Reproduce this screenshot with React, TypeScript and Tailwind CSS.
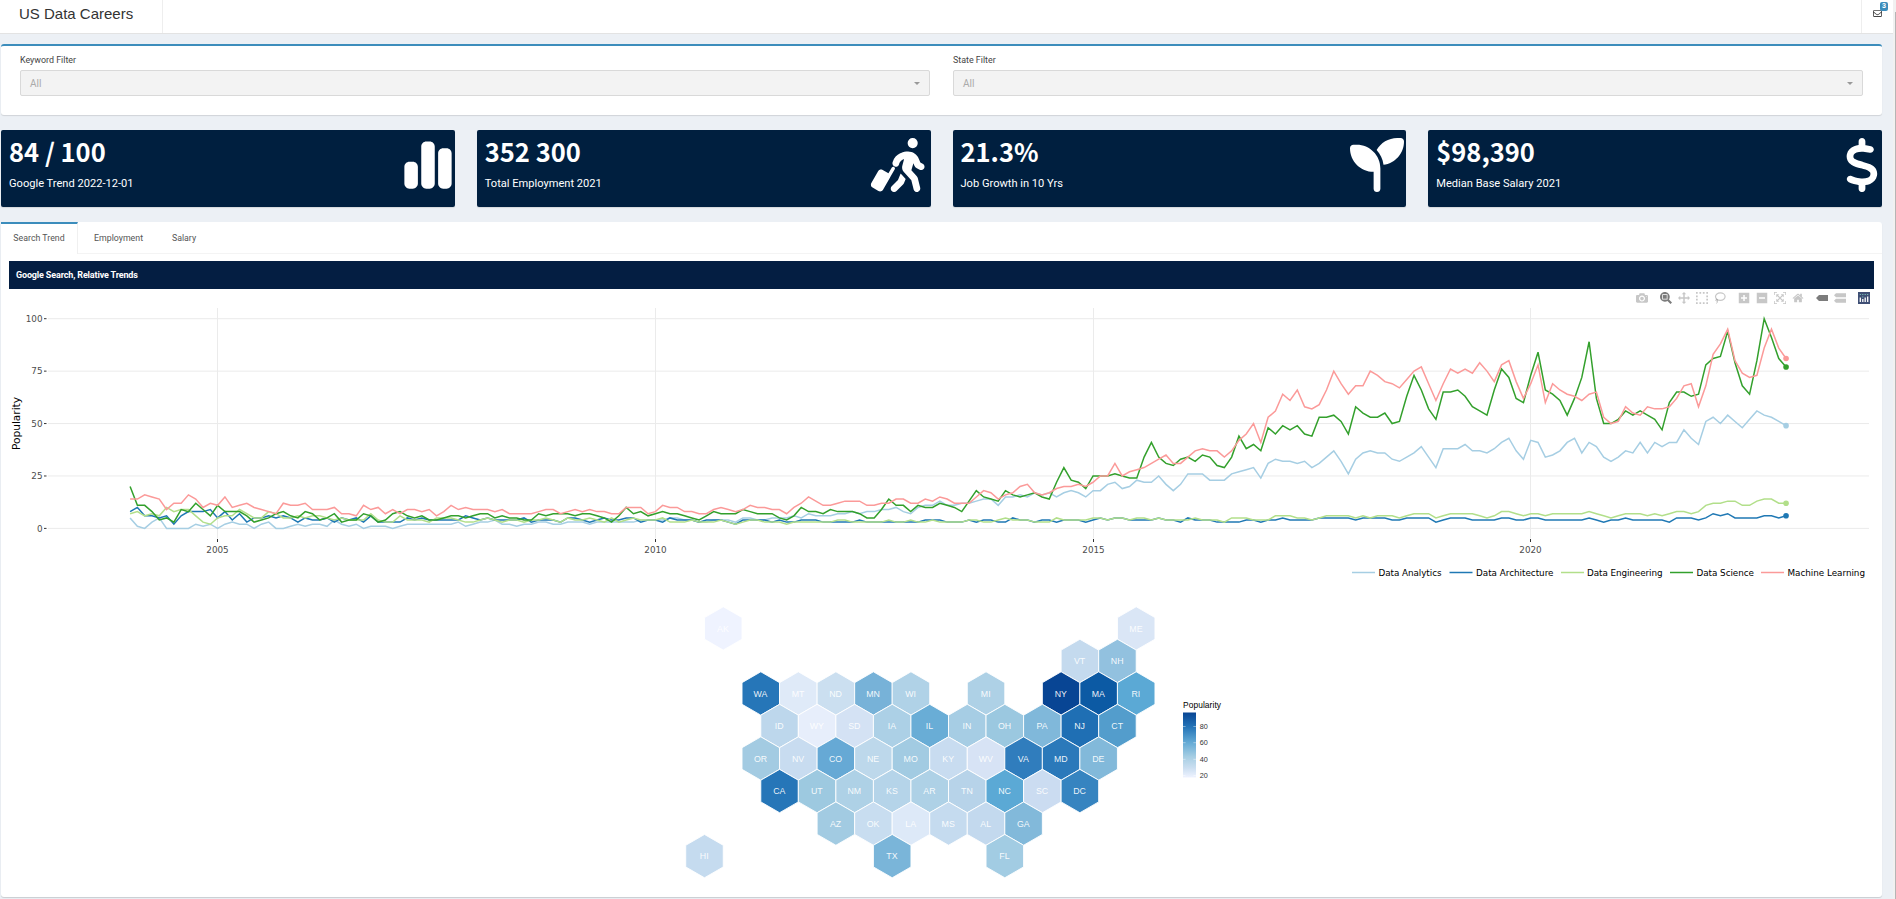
import { FaChartSimple, FaPersonWalkingLuggage, FaSeedling, FaDollarSign, FaRegEnvelope } from "react-icons/fa6";

const ML = [
  14,14,16,15,14,9,12,12,16,14,10,12, 11,15,10,11,12,10,9,8,7,12,11,11, 12,9,9,9,10,7,7,6,11,9,10,7,
  9,7,9,9,8,9,6,8,11,9,10,9, 9,9,8,9,7,7,7,7,8,9,9,7, 8,9,8,9,8,8,7,7,10,10,10,7,
  8,11,10,10,8,8,7,7,9,10,9,8, 9,11,10,10,9,9,7,10,12,15,13,11, 11,12,13,13,13,11,11,12,12,14,14,12,
  12,14,13,15,14,12,12,12,15,18,17,14, 16,17,20,21,17,16,17,19,20,20,21,20, 22,25,25,31,25,27,28,29,31,33,35,31,
  31,34,37,38,37,37,34,37,42,45,50,41, 53,56,64,61,66,58,57,59,66,75,69,64, 68,68,75,73,70,69,67,71,75,77,69,61,
  69,76,74,76,74,79,75,70,78,80,70,62, 69,78,60,69,66,64,63,61,64,65,53,50, 51,58,55,54,58,57,57,58,62,68,69,58,
  68,83,88,95,80,74,72,73,86,95,86,81,
];
const DS = [
  20,11,11,8,4,5,3,9,8,12,9,6, 11,8,8,8,6,3,4,5,7,8,6,5, 8,7,4,5,7,3,4,4,7,6,3,4,
  7,8,6,5,6,4,4,5,6,6,5,6, 7,7,5,6,5,5,4,4,7,6,7,7, 7,6,7,7,6,5,3,6,10,7,8,6,
  7,8,7,7,6,5,4,6,8,7,7,7, 9,8,7,7,7,5,4,6,10,8,8,7, 9,8,8,8,7,5,5,9,14,11,11,8,
  11,10,10,12,11,10,8,13,18,15,14,13, 18,16,15,16,17,15,14,22,29,23,22,19, 25,25,25,26,25,24,24,34,41,34,31,30,
  33,34,32,35,34,30,29,34,44,38,40,37, 48,45,49,47,49,45,44,53,53,54,51,45, 58,55,53,53,55,50,51,63,73,66,57,52,
  65,65,66,63,58,56,54,66,76,72,62,60, 73,84,66,64,61,54,62,72,89,62,50,50, 52,56,54,56,54,52,47,60,65,65,63,64,
  78,81,82,94,79,68,64,80,100,91,81,77,
];
const DA = [
  5,1,0,3,5,0,0,0,0,2,1,2, 0,2,3,2,2,0,2,3,0,0,1,2, 1,2,2,1,4,2,1,2,0,1,1,1,
  0,1,2,2,2,2,2,2,2,3,1,2, 3,3,4,2,2,1,2,2,3,3,2,2, 3,3,3,2,3,3,3,3,3,3,4,4,
  4,4,5,5,4,4,3,3,4,4,4,3, 5,5,4,4,5,5,5,6,5,7,6,6, 6,7,7,8,7,8,8,9,9,10,8,7,
  10,11,11,13,11,11,12,12,13,14,14,11, 15,15,16,15,17,16,17,15,17,18,17,15, 18,18,21,22,19,20,23,22,22,25,21,18,
  21,26,26,26,23,23,23,26,27,28,29,24, 31,33,32,32,31,32,29,31,34,37,32,26, 33,36,37,36,36,33,32,34,36,39,34,29,
  38,38,38,40,37,37,36,38,41,43,37,33, 42,41,34,35,37,41,43,36,41,39,34,32, 34,37,36,41,36,41,39,41,41,47,43,40,
  51,53,50,54,51,48,52,56,54,53,51,49,
];
const AR = [
  8,10,6,6,5,6,2,6,8,8,8,9, 5,8,4,7,3,5,5,6,5,6,5,3, 5,4,4,5,3,5,4,5,3,6,3,3,
  3,3,5,4,5,4,4,4,4,4,6,5, 4,5,4,4,4,4,5,3,4,4,4,3, 5,5,4,3,4,5,4,4,5,5,3,4,
  4,3,5,4,4,4,3,4,4,4,3,2, 4,4,4,4,3,4,3,3,4,4,4,3, 3,3,3,3,4,3,3,3,3,3,3,3,
  3,4,4,4,3,3,3,4,3,4,4,3, 3,5,4,4,3,4,4,3,4,4,4,3, 4,5,4,5,5,4,4,4,4,5,4,4,
  3,5,4,4,4,3,3,3,3,4,4,3, 4,4,5,4,4,4,4,5,5,5,5,5, 4,5,5,5,5,4,4,5,5,5,5,3,
  4,5,5,5,4,4,4,4,5,5,4,4, 5,5,4,4,4,4,4,4,5,4,3,4, 4,5,4,4,4,4,4,3,5,5,5,4,
  5,7,6,7,5,5,5,5,6,6,5,6,
];
const EN = [
  7,8,6,7,6,10,8,9,9,6,3,2, 5,6,6,9,7,5,5,8,7,5,5,6, 5,6,6,5,4,5,4,4,4,7,4,3,
  3,6,4,4,4,3,5,5,5,4,3,3, 4,5,4,3,4,4,3,4,4,5,4,3, 5,4,4,5,4,3,5,3,4,5,4,4,
  4,5,3,3,3,4,3,3,3,4,3,2, 3,4,4,3,3,3,2,3,3,3,3,3, 3,4,4,3,3,3,3,3,4,3,3,4,
  3,3,4,3,3,3,3,4,4,3,3,4, 5,4,4,4,3,3,3,5,4,4,4,4, 5,5,4,5,5,4,5,5,4,5,4,4,
  4,4,5,4,4,4,3,5,5,5,4,4, 4,6,6,6,5,5,4,5,6,6,6,6, 5,6,5,6,6,6,5,6,7,7,7,5,
  6,7,7,7,7,6,5,6,8,8,7,6, 7,7,6,7,7,7,7,7,8,7,6,5, 6,7,7,7,6,7,6,7,8,8,7,8,
  11,12,12,13,13,11,11,13,14,14,12,12,
];

type Series = { name: string; color: string; data: number[]; lineX: number; textX: number; textW: number };
const SERIES: Series[] = [
  { name: "Data Analytics", color: "#a6cee3", data: DA, lineX: 1352, textX: 1378.5, textW: 63 },
  { name: "Data Architecture", color: "#1f78b4", data: AR, lineX: 1449.5, textX: 1476, textW: 77.5 },
  { name: "Data Engineering", color: "#b2df8a", data: EN, lineX: 1561, textX: 1587, textW: 75.5 },
  { name: "Data Science", color: "#33a02c", data: DS, lineX: 1670, textX: 1696.5, textW: 57.5 },
  { name: "Machine Learning", color: "#fb9a99", data: ML, lineX: 1761, textX: 1787.5, textW: 77.5 },
];

const px = (m: number) => 130.1 + m * 7.295;
const py = (v: number) => 528.4 - v * 2.097;
const YEARS: [string, number][] = [["2005", 217.5], ["2010", 655.5], ["2015", 1093.5], ["2020", 1530.5]];

function TrendChart() {
  return (
    <svg className="block w-full h-[274px] font-['DejaVu_Sans',sans-serif]" viewBox="9 306 1865 274">
      {[0, 25, 50, 75, 100].map((v) => (
        <g key={v}>
          <line x1="48" x2="1869" y1={py(v)} y2={py(v)} stroke="#ebebeb" />
          <line x1="44" x2="46.5" y1={py(v)} y2={py(v)} stroke="#333" />
          <text x="42.5" y={py(v) + 3.3} fontSize="8.8" textAnchor="end" fill="#4d4d4d">{v}</text>
        </g>
      ))}
      {YEARS.map(([y, x]) => (
        <g key={y}>
          <line x1={x} x2={x} y1="308" y2="538.5" stroke="#ebebeb" />
          <line x1={x} x2={x} y1="539" y2="542" stroke="#333" />
          <text x={x} y="552.7" fontSize="8.8" textAnchor="middle" fill="#4d4d4d">{y}</text>
        </g>
      ))}
      <text transform="translate(20 423.5) rotate(-90)" textAnchor="middle" fontSize="10.6">Popularity</text>
      {SERIES.map((s) => (
        <polyline key={s.name} points={s.data.map((v, i) => `${px(i)},${py(v)}`).join(" ")} fill="none" stroke={s.color} strokeWidth="1.5" />
      ))}
      {SERIES.map((s) => (
        <circle key={s.name} cx={px(227)} cy={py(s.data[227])} r="2.8" fill={s.color} />
      ))}
      {SERIES.map((s) => (
        <g key={s.name}>
          <line x1={s.lineX} x2={s.lineX + 23} y1="572.5" y2="572.5" stroke={s.color} strokeWidth="1.5" />
          <text x={s.textX} y="575.7" fontSize="8.8" textLength={s.textW} fill="#000">{s.name}</text>
        </g>
      ))}
    </svg>
  );
}

const HEXES: [string, number, number, string][] = [
  ["AK", 0, -2, "#eff3ff"], ["ME", 0, 20, "#dae6f6"],
  ["VT", 1, 17, "#c4daee"], ["NH", 1, 19, "#92c1df"],
  ["WA", 2, 0, "#2676b8"], ["MT", 2, 2, "#dfeaf8"], ["ND", 2, 4, "#cbdff0"], ["MN", 2, 6, "#77b2d8"], ["WI", 2, 8, "#b0d2e7"],
  ["MI", 2, 12, "#aed1e6"], ["NY", 2, 16, "#084594"], ["MA", 2, 18, "#0c5aa4"], ["RI", 2, 20, "#5ba9d5"],
  ["ID", 3, 1, "#bdd7ec"], ["WY", 3, 3, "#e7eefb"], ["SD", 3, 5, "#d4e2f4"], ["IA", 3, 7, "#acd0e6"], ["IL", 3, 9, "#69add6"],
  ["IN", 3, 11, "#a6cde4"], ["OH", 3, 13, "#9bc8e0"], ["PA", 3, 15, "#80b8da"], ["NJ", 3, 17, "#1f6fb4"], ["CT", 3, 19, "#539dcc"],
  ["OR", 4, 0, "#a3cbe2"], ["NV", 4, 2, "#c8dcf0"], ["CO", 4, 4, "#66a9d5"], ["NE", 4, 6, "#bdd8eb"], ["MO", 4, 8, "#a2cbe2"],
  ["KY", 4, 10, "#c8dcf0"], ["WV", 4, 12, "#d7e3f5"], ["VA", 4, 14, "#307dbd"], ["MD", 4, 16, "#2b79ba"], ["DE", 4, 18, "#82b9da"],
  ["CA", 5, 1, "#2676b8"], ["UT", 5, 3, "#9dc9e0"], ["NM", 5, 5, "#aed1e6"], ["KS", 5, 7, "#b5d4e9"], ["AR", 5, 9, "#aed1e6"],
  ["TN", 5, 11, "#b7d3e9"], ["NC", 5, 13, "#5ba9d5"], ["SC", 5, 15, "#cbdcf1"], ["DC", 5, 17, "#3684c0"],
  ["AZ", 6, 4, "#a2cbe2"], ["OK", 6, 6, "#c8ddf0"], ["LA", 6, 8, "#dde9f8"], ["MS", 6, 10, "#c5dbef"], ["AL", 6, 12, "#c3d9ee"], ["GA", 6, 14, "#82b9da"],
  ["HI", 7, -3, "#c5dbef"], ["TX", 7, 7, "#7ab5d9"], ["FL", 7, 13, "#a2cce3"],
];
const HEX_POINTS = "0,-21.67 18.77,-10.83 18.77,10.83 0,21.67 -18.77,10.83 -18.77,-10.83";

function HexMap() {
  return (
    <svg className="block w-full h-[308px] font-['Liberation_Sans',sans-serif]" viewBox="9 580 1865 308">
      <defs>
        <linearGradient id="scale" x1="0" y1="0" x2="0" y2="1">
          <stop offset="0" stopColor="#084594" />
          <stop offset="0.22" stopColor="#2474b7" />
          <stop offset="0.47" stopColor="#66acd6" />
          <stop offset="0.68" stopColor="#a6cee3" />
          <stop offset="0.85" stopColor="#cadef0" />
          <stop offset="1" stopColor="#eff3ff" />
        </linearGradient>
      </defs>
      {HEXES.map(([n, r, c, f]) => (
        <g key={n} transform={`translate(${760.8 + c * 18.77} ${628.4 + r * 32.53})`}>
          <polygon points={HEX_POINTS} fill={f} stroke="#fff" strokeWidth="0.9" />
          <text x="-0.3" y="3.1" fontSize="8.8" textAnchor="middle" fill="#fff" fillOpacity="0.92">{n}</text>
        </g>
      ))}
      <text x="1183" y="708" fontSize="8.4" textLength="38">Popularity</text>
      <rect x="1183" y="712.5" width="13" height="65" fill="url(#scale)" />
      {([[80, 726.5], [60, 742.7], [40, 759.3], [20, 775.5]] as const).map(([v, y]) => (
        <g key={v}>
          <path d={`M1183 ${y}h2.6M1193.4 ${y}h2.6`} stroke="#fff" strokeOpacity="0.6" strokeWidth="0.7" />
          <text x="1199.8" y={y + 2.5} fontSize="7.2" fill="#333">{v}</text>
        </g>
      ))}
    </svg>
  );
}

const CAMERA = "m500 450c-83 0-150-67-150-150 0-83 67-150 150-150 83 0 150 67 150 150 0 83-67 150-150 150z m400 150h-120c-16 0-34 13-39 29l-31 93c-6 15-23 28-40 28h-340c-16 0-34-13-39-28l-31-94c-6-15-23-28-40-28h-120c-55 0-100-45-100-100v-450c0-55 45-100 100-100h800c55 0 100 45 100 100v450c0 55-45 100-100 100z m-400-550c-138 0-250 112-250 250 0 138 112 250 250 250 138 0 250-112 250-250 0-138-112-250-250-250z m365 380c-19 0-35 16-35 35 0 19 16 35 35 35 19 0 35-16 35-35 0-19-16-35-35-35z";
const ZOOM = "m1000-25l-250 251c40 63 63 138 63 218 0 224-182 406-407 406-224 0-406-182-406-406s183-406 407-406c80 0 155 22 218 62l250-250 125 125z m-812 250l0 438 437 0 0-438-437 0z m62 375l313 0 0-312-313 0 0 312z";
const PAN = "m1000 350l-187 188 0-125-250 0 0 250 125 0-188 187-187-187 125 0 0-250-250 0 0 125-188-188 186-187 0 125 252 0 0-250-125 0 187-188 188 188-125 0 0 250 250 0 0-126 187 188z";
const SELECT = "m0 850l0-143 143 0 0 143-143 0z m286 0l0-143 143 0 0 143-143 0z m285 0l0-143 143 0 0 143-143 0z m286 0l0-143 143 0 0 143-143 0z m-857-286l0-143 143 0 0 143-143 0z m857 0l0-143 143 0 0 143-143 0z m-857-285l0-143 143 0 0 143-143 0z m857 0l0-143 143 0 0 143-143 0z m-857-286l0-143 143 0 0 143-143 0z m286 0l0-143 143 0 0 143-143 0z m285 0l0-143 143 0 0 143-143 0z m286 0l0-143 143 0 0 143-143 0z";
const PLUS = "m1 787l0-875 875 0 0 875-875 0z m687-500l-187 0 0-187-125 0 0 187-188 0 0 125 188 0 0 187 125 0 0-187 187 0 0-125z";
const MINUS = "m0 788l0-876 875 0 0 876-875 0z m688-500l-500 0 0 125 500 0 0-125z";
const AUTOSCALE = "m250 850l-187 0-63 0 0-62 0-188 63 0 0 188 187 0 0 62z m688 0l-188 0 0-62 188 0 0-188 62 0 0 188 0 62-62 0z m-875-938l0 188-63 0 0-188 0-62 63 0 187 0 0 62-187 0z m875 188l0-188-188 0 0-62 188 0 62 0 0 62 0 188-62 0z m-125 188l-1 0-93-94-156 156 156 156 92-93 2 0 0 250-250 0 0-2 93-92-156-156-156 156 94 92 0 2-250 0 0-250 0 0 93 93 157-156-157-156-93 94 0 0 0-250 250 0 0 0-94 93 156 157 156-157-93-93 0 0 250 0 0 250z";
const HOME = "m786 296v-267q0-15-11-26t-25-10h-214v214h-143v-214h-214q-15 0-25 10t-11 26v267q0 1 0 2t0 2l321 264 321-264q1-1 1-4z m124 39l-34-41q-5-5-12-6h-2q-7 0-12 3l-386 322-386-322q-7-4-13-4-7 2-12 7l-35 41q-4 5-3 13t6 12l401 334q18 15 42 15t43-15l136-114v109q0 8 5 13t13 5h107q8 0 13-5t5-13v-227l122-102q5-5 6-12t-4-13z";
const TAG = "m375 725l0 0-375-375 375-374 0-1 1125 0 0 750-1125 0z";
const COMPARE = "m187 786l0 2-187-188 188-187 0 0 937 0 0 373-938 0z m0-499l0 1-187-188 188-188 0 0 937 0 0 376-938-1z";

function ModeIcon({ d, w = 1000, active = false }: { d: string; w?: number; active?: boolean }) {
  return (
    <svg className="size-3" viewBox={`0 0 ${w} 1000`}>
      <path d={d} transform="matrix(1 0 0 -1 0 850)" fill="#444" fillOpacity={active ? 0.7 : 0.3} />
    </svg>
  );
}

function ModeBar() {
  return (
    <div className="flex h-[17px] items-center justify-end gap-3 pr-1 pt-px">
      <ModeIcon d={CAMERA} />
      <div className="flex gap-1.5">
        <ModeIcon d={ZOOM} active />
        <ModeIcon d={PAN} />
        <ModeIcon d={SELECT} />
        <svg className="size-3" viewBox="0 0 12 12" fill="none" stroke="#444" strokeOpacity="0.3">
          <ellipse cx="6.3" cy="4.6" rx="4.8" ry="3.7" strokeWidth="1.2" />
          <path d="M2.6 7.2C1.2 7.6 1.6 9.3 3 9c1.2-.3.6-1.7-.4-1.8M3.3 9c.3 1-.1 1.9-1 2.5" />
        </svg>
      </div>
      <div className="flex gap-1.5">
        <ModeIcon d={PLUS} w={875} />
        <ModeIcon d={MINUS} w={875} />
        <ModeIcon d={AUTOSCALE} />
        <ModeIcon d={HOME} w={928.6} />
      </div>
      <div className="flex gap-1.5">
        <ModeIcon d={TAG} w={1500} active />
        <ModeIcon d={COMPARE} w={1125} />
      </div>
      <svg className="size-3" viewBox="0 0 12 12">
        <rect width="12" height="12" fill="#3f4f75" />
        <path d="M2.3 5.5v4.5M4.8 7v3M7.2 5.5v4.5M9.7 4.5v5.5" stroke="#fff" strokeWidth="1.3" />
        <path d="M1.8 2.5h1M4.3 2.5h1M6.7 2.5h1M9.2 2.5h1M4.3 5h1" stroke="#80cfbe" strokeWidth="1" />
      </svg>
    </div>
  );
}

function Filter({ label }: { label: string }) {
  return (
    <div className="flex-1">
      <div className="h-[17px] pt-px text-[8.9px] leading-[12px] text-[#444]">{label}</div>
      <div className="flex h-[26px] items-center justify-between rounded-xs border border-[#d9d9d9] bg-[#f3f3f3] px-[9px] text-[10px] text-[#aaa]">
        All
        <span className="border-x-[3px] border-t-[3px] border-x-transparent border-t-[#999]" />
      </div>
    </div>
  );
}

const CARDS = [
  { value: "84 / 100", label: "Google Trend 2022-12-01", icon: <FaChartSimple className="size-[54px]" /> },
  { value: "352 300", label: "Total Employment 2021", icon: <FaPersonWalkingLuggage className="mr-[3px] h-[54px] w-[61px]" /> },
  { value: "21.3%", label: "Job Growth in 10 Yrs", icon: <FaSeedling className="mr-[2px] size-[54px]" /> },
  { value: "$98,390", label: "Median Base Salary 2021", icon: <FaDollarSign className="-mr-[7px] size-[54px]" /> },
];

export default function App() {
  return (
    <div className="flex h-[899px] w-[1896px] overflow-hidden bg-[#ecf0f5] font-[Roboto,sans-serif]">
      <div className="flex w-[1893px] flex-col">
        <header className="flex h-[34px] shrink-0 justify-between border-b border-[#e3e3e3] bg-white">
          <div className="w-[163px] border-r border-[#eee] pl-[19px] pt-[3px] font-['Liberation_Sans',sans-serif] text-[15px] leading-[22px] text-[#333]">US Data Careers</div>
          <div className="relative w-[32px] border-l border-[#eee] text-[#444]">
            <FaRegEnvelope className="ml-[11px] mt-[9px] size-[9px]" />
            <span className="absolute left-[18px] top-[2px] flex h-[9px] w-[8px] items-center justify-center rounded-[2px] bg-[#3c8dbc] text-[7px] font-bold leading-none text-white">3</span>
          </div>
        </header>

        <main className="flex w-[1882px] flex-1 flex-col pl-px pt-[10px]">
          <section className="flex h-[71px] gap-[23px] rounded-[3px] border-t-2 border-[#3c8dbc] bg-white px-[19px] pt-[7px] shadow-[0_1px_1px_rgba(0,0,0,0.12)]">
            <Filter label="Keyword Filter" />
            <Filter label="State Filter" />
          </section>

          <section className="mt-[15px] grid grid-cols-4 gap-[22px]">
            {CARDS.map((c) => (
              <div key={c.label} className="flex h-[77px] justify-between rounded-xs bg-[#001f3f] pl-2 text-white shadow-[0_1px_1px_rgba(0,0,0,0.1)]">
                <div>
                  <div className="mt-[3px] font-['Noto_Sans_CJK_JP',sans-serif] text-[25.5px] font-bold leading-[36px]">{c.value}</div>
                  <div className="mt-[8px] text-[11.1px] leading-[14px]">{c.label}</div>
                </div>
                <div className="pt-[8px]">{c.icon}</div>
              </div>
            ))}
          </section>

          <section className="mt-[15px] flex h-[675px] flex-col rounded-[3px] bg-white shadow-[0_1px_1px_rgba(0,0,0,0.15)]">
            <nav className="flex h-[32px] border-b border-[#f4f4f4] text-[8.8px] text-[#555]">
              <span className="flex h-[32px] w-[77px] items-center justify-center border-r border-t-2 border-r-[#f0f0f0] border-t-[#3c8dbc] bg-white">Search Trend</span>
              <span className="flex w-[81px] items-center justify-center pt-[2px]">Employment</span>
              <span className="flex w-[50px] items-center justify-center pt-[2px]">Salary</span>
            </nav>
            <div className="flex flex-col px-2 pt-[7px]">
              <div className="h-[28px] bg-[#041e42] pl-[7px] text-[9px] font-bold leading-[28px] tracking-[-0.15px] text-white">Google Search, Relative Trends</div>
              <ModeBar />
              <TrendChart />
              <HexMap />
            </div>
          </section>
        </main>
      </div>
      <div className="flex-1 bg-[#f1f1f1] pl-0.5 pt-3">
        <div className="h-full bg-[#b5b5b5]" />
      </div>
    </div>
  );
}
